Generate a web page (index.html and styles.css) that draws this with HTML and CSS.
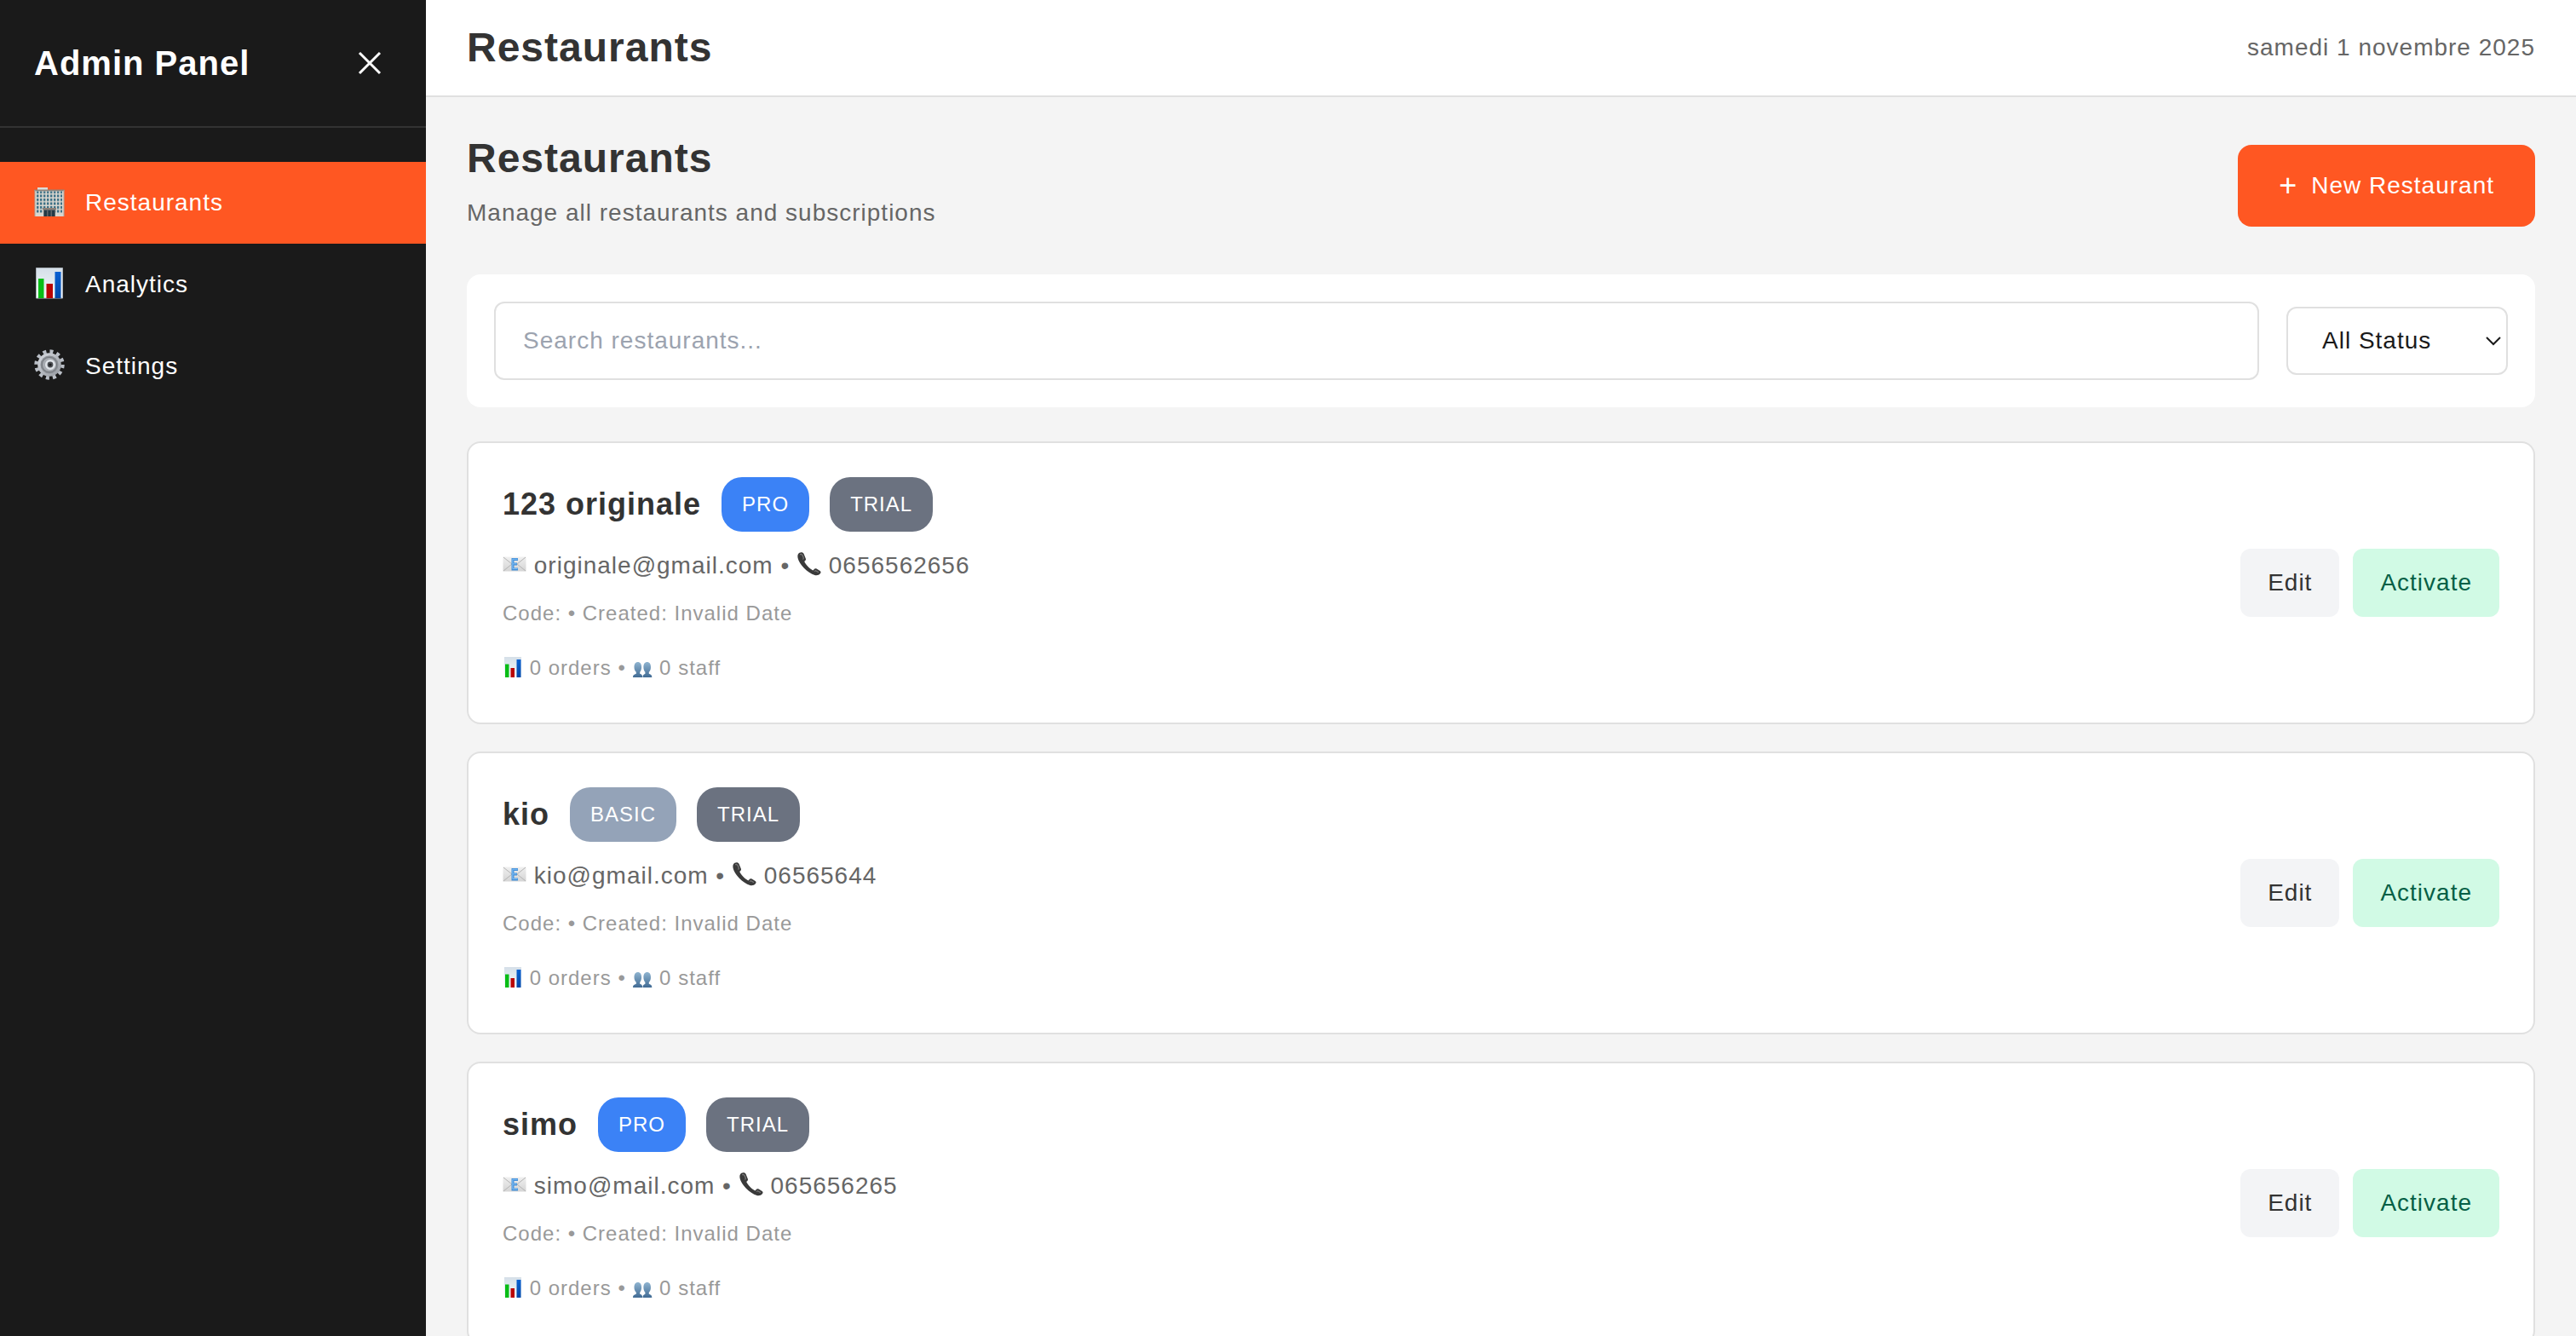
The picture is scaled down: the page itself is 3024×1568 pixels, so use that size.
FILE: index.html
```html
<!DOCTYPE html>
<html lang="en">
<head>
<meta charset="utf-8">
<meta name="viewport" content="width=device-width, initial-scale=1">
<title>Admin Panel</title>
<link rel="stylesheet" href="styles.css">
</head>
<body>
<svg class="sprite" aria-hidden="true">
  <defs>
    <linearGradient id="paper" x1="0" y1="0" x2="0" y2="1"><stop offset="0" stop-color="#d5dfe8"/><stop offset="1" stop-color="#f4f9fc"/></linearGradient>
    <linearGradient id="blue-bar" x1="0" y1="0" x2="0" y2="1"><stop offset="0" stop-color="#0a60d2"/><stop offset="1" stop-color="#0048a8"/></linearGradient>
    <linearGradient id="steel" x1="0" y1="0" x2="1" y2="1"><stop offset="0" stop-color="#d9dde3"/><stop offset="1" stop-color="#92969d"/></linearGradient>
    <linearGradient id="envelope" x1="0" y1="0" x2="0" y2="1"><stop offset="0" stop-color="#f0f0f0"/><stop offset="1" stop-color="#d4d4d4"/></linearGradient>
    <linearGradient id="bust" x1="0" y1="0" x2="0" y2="1"><stop offset="0" stop-color="#8fb4d0"/><stop offset="1" stop-color="#416b94"/></linearGradient>
    <pattern id="windows" x="3" y="6" width="4" height="4.5" patternUnits="userSpaceOnUse"><rect width="2.4" height="3" fill="#3d7186"/></pattern>
  </defs>
  <symbol id="i-building" viewBox="0 0 36 40">
    <path d="M4 2h12v3H4z" fill="#dcdcda"/>
    <path d="M1 5h34v31H1z" fill="#d8d6cf"/>
    <path d="M.5 4.500h35v1.800H.5z" fill="#8f857d"/>
    <path d="M3 6.500h30v26H3z" fill="url(#windows)"/>
    <path d="M10 26h16v2H10z" fill="#8b8078"/>
    <path d="M11 28h14v8H11z" fill="#5f676b"/>
    <path d="M12 29h3v7h-3zM16.500 29h3v7h-3zM21 29h3v7h-3z" fill="#243a46"/>
    <path d="M1 5v31M35 5v31" stroke="#a9a49c"/>
  </symbol>
  <symbol id="i-chart-tall" viewBox="0 0 36 40">
    <path d="M2.500.5h31V36h-31z" fill="url(#paper)" stroke="#aab0b8"/>
    <path d="M5 13h6.500v23H5z" fill="#09bd16"/>
    <path d="M14.500 19H22v17h-7.500z" fill="#b90404"/>
    <path d="M24.500 5h7v31h-7z" fill="url(#blue-bar)"/>
  </symbol>
  <symbol id="i-gear" viewBox="0 0 36 40">
    <circle cx="18" cy="18" r="15.500" fill="none" stroke="#b9bec6" stroke-width="4.400" stroke-dasharray="4 4.115"/>
    <circle cx="18" cy="18" r="13.800" fill="url(#steel)"/>
    <circle cx="18" cy="18" r="10.500" fill="#8a8e94"/>
    <circle cx="18" cy="18" r="8.600" fill="#a7abb1" stroke="#74787e"/>
    <circle cx="19" cy="18" r="4.700" fill="#4a4d52" stroke="#dfe3e8" stroke-width="2.600"/>
    <circle cx="19" cy="18" r="1.600" fill="#1c1d1f"/>
  </symbol>
  <symbol id="i-chart" viewBox="0 0 24 24">
    <path d="M2 0h20v24H2z" fill="url(#paper)"/>
    <path d="M3 8.500h4.500V24H3z" fill="#09bd16"/>
    <path d="M9.500 13H14v11H9.500z" fill="#b90404"/>
    <path d="M16.500 3h5v21h-5z" fill="url(#blue-bar)"/>
  </symbol>
  <symbol id="i-mail" viewBox="0 0 28 28">
    <path d="M.5 5.500h27v17H.5z" fill="url(#envelope)"/>
    <path d="M1 6l10 8L1 22M27 6l-10 8 10 8" fill="none" stroke="#b4b4b4"/>
    <path d="M18 8.500h-6v11.500h6M12 14h5" fill="none" stroke="#438fd8" stroke-width="3"/>
    <path d="M17.500 8.300h-5.700v11.200h5.700M12 13.800h4.500" fill="none" stroke="#7dbcf6"/>
  </symbol>
  <symbol id="i-phone" viewBox="0 0 28 28">
    <path d="M2.500.8C.5 2 0 4 .6 7 2 14 12 24.500 20.500 27c2.500.7 5-.2 6.500-2 .9-1.200.7-2.300-.4-3.100l-4-2.300c-1.200-.6-2.200-.4-3 .6l-1.200 1.300c-4-2-8.800-7-10.200-10.500l1.100-1c.7-.7.9-1.500.5-2.500L7.600 2C6.800.2 4.500-.3 2.500.8z" fill="#3a3a3a"/>
    <path d="M3.200 3c1-.8 2.200-.6 2.800.5l1.200 3c.3.800 0 1.500-.8 2M20 22.500l1.500-.8 3.500 2" fill="none" stroke="#777" stroke-width="1.300"/>
  </symbol>
  <symbol id="i-people" viewBox="0 0 24 24">
    <path d="M1 24c0-2.500 1-3.400 3.800-4.200v-2C3.300 16.500 2.500 14.500 2.500 12c0-3.700 1.500-6 4.300-6s4.300 2.300 4.300 6c0 2.500-.7 4.500-1.900 5.800v2c2.200.7 3 1.700 3 4.200z" fill="url(#bust)"/>
    <path d="M12.600 24c0-2.500.6-3.400 2.800-4.200v-2c-1.300-1.300-2-3.300-2-5.800 0-3.700 1.500-6 4.300-6s4.300 2.300 4.300 6c0 2.500-.8 4.500-2.200 5.800v2c2.500.8 3.500 1.700 3.500 4.200z" fill="url(#bust)"/>
  </symbol>
</svg>

<div class="app">
  <aside class="sidebar">
    <div class="sidebar-head">
      <p class="brand">Admin Panel</p>
      <button class="close" type="button" aria-label="Close menu">
        <svg viewBox="0 0 24 24" aria-hidden="true"><path d="M6 18L18 6M6 6l12 12" fill="none" stroke="currentColor" stroke-width="1.500"/></svg>
      </button>
    </div>
    <nav class="nav">
      <a class="nav-link active" href="#restaurants"><svg class="nav-icon" aria-hidden="true"><use href="#i-building"/></svg>Restaurants</a>
      <a class="nav-link" href="#analytics"><svg class="nav-icon" aria-hidden="true"><use href="#i-chart-tall"/></svg>Analytics</a>
      <a class="nav-link" href="#settings"><svg class="nav-icon" aria-hidden="true"><use href="#i-gear"/></svg>Settings</a>
    </nav>
  </aside>

  <div class="main">
    <header class="topbar">
      <h1 class="title">Restaurants</h1>
      <time class="muted" datetime="2025-11-01">samedi 1 novembre 2025</time>
    </header>

    <main class="content">
      <div class="page-head">
        <div class="page-intro">
          <h2 class="title">Restaurants</h2>
          <p class="muted">Manage all restaurants and subscriptions</p>
        </div>
        <button class="btn-new" type="button"><span class="plus">+</span><span>New Restaurant</span></button>
      </div>

      <form class="filters">
        <input class="search" type="text" placeholder="Search restaurants..." aria-label="Search restaurants">
        <div class="status">
          <select class="status-select" aria-label="Status">
            <option>All Status</option>
          </select>
          <svg class="chevron" viewBox="0 0 20 12" aria-hidden="true"><path d="M2 2l8 8 8-8" fill="none" stroke="currentColor" stroke-width="2"/></svg>
        </div>
      </form>

      <div class="list">
        <article class="card">
          <div class="info">
            <div class="name-row"><h3 class="name">123 originale</h3><span class="badge pro">PRO</span><span class="badge trial">TRIAL</span></div>
            <p class="contact"><svg class="icon-m" aria-hidden="true"><use href="#i-mail"/></svg> originale@gmail.com • <svg class="icon-m" aria-hidden="true"><use href="#i-phone"/></svg> 0656562656</p>
            <p class="meta">Code: • Created: Invalid Date</p>
            <p class="meta stats"><svg class="icon-s" aria-hidden="true"><use href="#i-chart"/></svg> 0 orders • <svg class="icon-s" aria-hidden="true"><use href="#i-people"/></svg> 0 staff</p>
          </div>
          <div class="actions"><button class="btn edit" type="button">Edit</button><button class="btn activate" type="button">Activate</button></div>
        </article>

        <article class="card">
          <div class="info">
            <div class="name-row"><h3 class="name">kio</h3><span class="badge basic">BASIC</span><span class="badge trial">TRIAL</span></div>
            <p class="contact"><svg class="icon-m" aria-hidden="true"><use href="#i-mail"/></svg> kio@gmail.com • <svg class="icon-m" aria-hidden="true"><use href="#i-phone"/></svg> 06565644</p>
            <p class="meta">Code: • Created: Invalid Date</p>
            <p class="meta stats"><svg class="icon-s" aria-hidden="true"><use href="#i-chart"/></svg> 0 orders • <svg class="icon-s" aria-hidden="true"><use href="#i-people"/></svg> 0 staff</p>
          </div>
          <div class="actions"><button class="btn edit" type="button">Edit</button><button class="btn activate" type="button">Activate</button></div>
        </article>

        <article class="card">
          <div class="info">
            <div class="name-row"><h3 class="name">simo</h3><span class="badge pro">PRO</span><span class="badge trial">TRIAL</span></div>
            <p class="contact"><svg class="icon-m" aria-hidden="true"><use href="#i-mail"/></svg> simo@mail.com • <svg class="icon-m" aria-hidden="true"><use href="#i-phone"/></svg> 065656265</p>
            <p class="meta">Code: • Created: Invalid Date</p>
            <p class="meta stats"><svg class="icon-s" aria-hidden="true"><use href="#i-chart"/></svg> 0 orders • <svg class="icon-s" aria-hidden="true"><use href="#i-people"/></svg> 0 staff</p>
          </div>
          <div class="actions"><button class="btn edit" type="button">Edit</button><button class="btn activate" type="button">Activate</button></div>
        </article>
      </div>
    </main>
  </div>
</div>
</body>
</html>
```
FILE: styles.css
```css
*,
*::before,
*::after {
  box-sizing: border-box;
}

body {
  margin: 0;
  background: #f4f4f4;
  color: #333;
  font-family: "Liberation Sans", Arial, Helvetica, sans-serif;
  font-size: 28px;
  line-height: 48px;
  letter-spacing: 1px;
}

h1, h2, h3, p {
  margin: 0;
}

button, input, select {
  font: inherit;
  letter-spacing: inherit;
}

button {
  border: 0;
  cursor: pointer;
}

.sprite {
  position: absolute;
  width: 0;
  height: 0;
}

.app {
  display: flex;
  height: 100vh;
  overflow: hidden;
}

/* Sidebar */
.sidebar {
  flex: 0 0 500px;
  background: #1a1a1a;
  color: #fff;
}

.sidebar-head {
  display: flex;
  align-items: center;
  justify-content: space-between;
  padding: 48px 40px;
  border-bottom: 2px solid #333;
}

.brand {
  font-size: 40px;
  font-weight: 700;
  line-height: 52px;
}

.close {
  display: grid;
  place-items: center;
  width: 52px;
  height: 52px;
  padding: 0;
  background: none;
  color: inherit;
}

.close svg {
  width: 48px;
  height: 48px;
}

.nav {
  padding-top: 40px;
}

.nav-link {
  display: flex;
  align-items: center;
  gap: 24px;
  padding: 24px 40px;
  color: #fff;
  text-decoration: none;
}

.nav-link.active {
  background: #ff5722;
}

.nav-icon {
  width: 36px;
  height: 40px;
}

/* Main column */
.main {
  flex: 1;
  min-width: 0;
  overflow-y: auto;
  scrollbar-width: none;
}

.topbar {
  display: flex;
  align-items: center;
  justify-content: space-between;
  padding: 32px 48px;
  background: #fff;
  border-bottom: 2px solid #e0e0e0;
}

.title {
  font-size: 48px;
  font-weight: 700;
  line-height: 48px;
}

.muted {
  color: #666;
}

.content {
  padding: 48px;
}

.page-head {
  display: flex;
  align-items: center;
  justify-content: space-between;
  margin-bottom: 48px;
}

.page-intro {
  display: grid;
  gap: 16px;
}

.btn-new {
  display: flex;
  align-items: center;
  gap: 16px;
  padding: 24px 48px;
  border-radius: 16px;
  background: #ff5722;
  color: #fff;
}

.plus {
  font-size: 36px;
}

/* Filters */
.filters {
  display: flex;
  align-items: center;
  gap: 32px;
  margin-bottom: 40px;
  padding: 32px;
  border-radius: 16px;
  background: #fff;
}

.search {
  flex: 1;
  min-width: 0;
  height: 92px;
  padding: 0 32px;
  border: 2px solid #e0e0e0;
  border-radius: 12px;
  background: #fff;
  color: #333;
}

.search::placeholder {
  color: #9ca3af;
}

.status {
  position: relative;
  flex: 0 0 260px;
}

.status-select {
  display: block;
  width: 100%;
  height: 80px;
  padding: 0 40px;
  border: 2px solid #e0e0e0;
  border-radius: 12px;
  appearance: none;
  background: #fff;
  color: #1a1a1a;
}

.chevron {
  position: absolute;
  top: 34px;
  right: 7px;
  width: 20px;
  height: 12px;
  color: #1a1a1a;
  pointer-events: none;
}

/* Restaurant cards */
.list {
  display: grid;
  gap: 32px;
}

.card {
  display: flex;
  align-items: center;
  justify-content: space-between;
  padding: 40px;
  border: 2px solid #e0e0e0;
  border-radius: 16px;
  background: #fff;
}

.name-row {
  display: flex;
  align-items: center;
  gap: 24px;
  margin-bottom: 16px;
}

.name {
  font-size: 36px;
  font-weight: 700;
}

.badge {
  padding: 8px 24px;
  border-radius: 24px;
  color: #fff;
  font-size: 24px;
}

.pro {
  background: #3b82f6;
}

.basic {
  background: #94a3b8;
}

.trial {
  background: #6b7280;
}

.contact {
  margin-bottom: 8px;
  color: #666;
}

.meta {
  color: #999;
  font-size: 24px;
}

.stats {
  margin-top: 16px;
}

.icon-m {
  width: 28px;
  height: 28px;
  vertical-align: -3px;
}

.icon-s {
  width: 24px;
  height: 24px;
  vertical-align: -3px;
}

.actions {
  display: flex;
  gap: 16px;
}

.btn {
  padding: 16px 32px;
  border-radius: 12px;
}

.edit {
  background: #f3f4f6;
  color: #333;
}

.activate {
  background: #d1fae5;
  color: #065f46;
}
```
